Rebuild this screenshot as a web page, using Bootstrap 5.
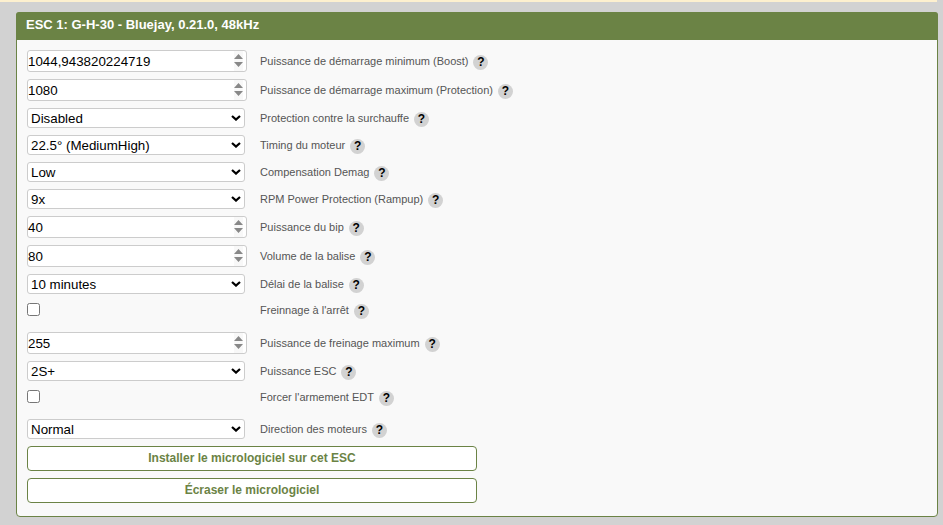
<!DOCTYPE html>
<html lang="fr">
<head>
<meta charset="utf-8">
<title>ESC</title>
<link href="https://cdn.jsdelivr.net/npm/bootstrap@5.3.0/dist/css/bootstrap.min.css" rel="stylesheet">
<style>
html,body{height:100%}
body{background:#d2d2d2;font-family:"Liberation Sans",Arial,sans-serif;font-size:11px;color:#555;overflow:hidden}
.topstrip{height:2px;background:#fdf0cf;margin-right:6px}
.esc-card{margin:10px 5px 0 16px;border:1px solid #6b8345;border-radius:4px;background:#f9f9f9;height:505px}
.esc-card .card-header{background:#6b8345;color:#fff;font-weight:700;font-size:13px;line-height:26px;height:28px;padding:0 10px;border:0;border-radius:3px 3px 0 0;margin:-1px -1px 0}
.esc-card .card-body{padding:10px 10px 0}
.set-list{display:flex;flex-direction:column;gap:7px}
.set-row{display:flex;align-items:center}
.set-field{width:220px;flex:none;margin-right:13px}
.set-row input.form-control{height:22px;min-height:0;width:220px;padding:0 20px 0 0;font-size:13.333px;line-height:20px;color:#000;border:1px solid #ccc;border-radius:3px;box-shadow:none;background:#fff url("data:image/svg+xml,%3csvg xmlns='http://www.w3.org/2000/svg' width='9' height='20'%3e%3crect width='9' height='20' fill='%23f8f8f8'/%3e%3cpath fill='%23888' d='M0 8l4.5-5 4.5 5zM0 11h9l-4.5 5z'/%3e%3c/svg%3e") no-repeat right 3px center}
.set-row select.form-select{height:20px;width:218px;padding:1px 24px 0 3px;font-size:13.333px;line-height:17px;color:#000;border:1px solid #ccc;border-radius:3px;background-color:#fff;background-position:right 3px center;background-size:10px 6px;background-image:url("data:image/svg+xml,%3csvg xmlns='http://www.w3.org/2000/svg' viewBox='0 0 10 6'%3e%3cpath fill='none' stroke='%23000' stroke-width='2.2' d='M1 1l4 3.6L9 1'/%3e%3c/svg%3e")}
.set-check{height:24px;margin-bottom:0;align-items:flex-start}
.set-check .form-check-input{width:13px;height:13px;margin:2px 0 0;display:block;border:1px solid #767676;border-radius:2.5px;background-color:#fff}
.set-label{line-height:14px;white-space:nowrap;padding-top:2px}
.set-check .set-label{padding-top:0;margin-top:2px}
.hint{display:inline-block;width:15px;height:15px;border-radius:50%;background:#d2d2d2;color:#000;font-weight:700;font-size:12px;line-height:15px;text-align:center;margin-left:5px;vertical-align:middle}
.fw-actions{width:450px;margin-top:7px;display:flex;flex-direction:column;gap:7px}
.fw-btn{height:25px;padding:0;background:#fff;border:1px solid #6b8345;border-radius:4px;color:#6b8345;font-weight:700;font-size:12px;line-height:23px}
</style>
</head>
<body>
<div class="topstrip"></div>
<div class="card esc-card">
  <div class="card-header">ESC 1: G-H-30 - Bluejay, 0.21.0, 48kHz</div>
  <div class="card-body">
    <div class="set-list">
      <div class="set-row"><div class="set-field"><input class="form-control" type="text" inputmode="decimal" value="1044,943820224719"></div><span class="set-label">Puissance de démarrage minimum (Boost)<span class="hint">?</span></span></div>
      <div class="set-row"><div class="set-field"><input class="form-control" type="text" inputmode="decimal" value="1080"></div><span class="set-label">Puissance de démarrage maximum (Protection)<span class="hint">?</span></span></div>
      <div class="set-row"><div class="set-field"><select class="form-select"><option>Disabled</option></select></div><span class="set-label">Protection contre la surchauffe<span class="hint">?</span></span></div>
      <div class="set-row"><div class="set-field"><select class="form-select"><option>22.5° (MediumHigh)</option></select></div><span class="set-label">Timing du moteur<span class="hint">?</span></span></div>
      <div class="set-row"><div class="set-field"><select class="form-select"><option>Low</option></select></div><span class="set-label">Compensation Demag<span class="hint">?</span></span></div>
      <div class="set-row"><div class="set-field"><select class="form-select"><option>9x</option></select></div><span class="set-label">RPM Power Protection (Rampup)<span class="hint">?</span></span></div>
      <div class="set-row"><div class="set-field"><input class="form-control" type="text" inputmode="decimal" value="40"></div><span class="set-label">Puissance du bip<span class="hint">?</span></span></div>
      <div class="set-row"><div class="set-field"><input class="form-control" type="text" inputmode="decimal" value="80"></div><span class="set-label">Volume de la balise<span class="hint">?</span></span></div>
      <div class="set-row"><div class="set-field"><select class="form-select"><option>10 minutes</option></select></div><span class="set-label">Délai de la balise<span class="hint">?</span></span></div>
      <div class="set-row set-check"><div class="set-field"><input class="form-check-input" type="checkbox"></div><span class="set-label">Freinnage à l'arrêt<span class="hint">?</span></span></div>
      <div class="set-row"><div class="set-field"><input class="form-control" type="text" inputmode="decimal" value="255"></div><span class="set-label">Puissance de freinage maximum<span class="hint">?</span></span></div>
      <div class="set-row"><div class="set-field"><select class="form-select"><option>2S+</option></select></div><span class="set-label">Puissance ESC<span class="hint">?</span></span></div>
      <div class="set-row set-check"><div class="set-field"><input class="form-check-input" type="checkbox"></div><span class="set-label">Forcer l'armement EDT<span class="hint">?</span></span></div>
      <div class="set-row"><div class="set-field"><select class="form-select"><option>Normal</option></select></div><span class="set-label">Direction des moteurs<span class="hint">?</span></span></div>
    </div>
    <div class="fw-actions">
      <button type="button" class="btn fw-btn">Installer le micrologiciel sur cet ESC</button>
      <button type="button" class="btn fw-btn">Écraser le micrologiciel</button>
    </div>
  </div>
</div>
</body>
</html>
